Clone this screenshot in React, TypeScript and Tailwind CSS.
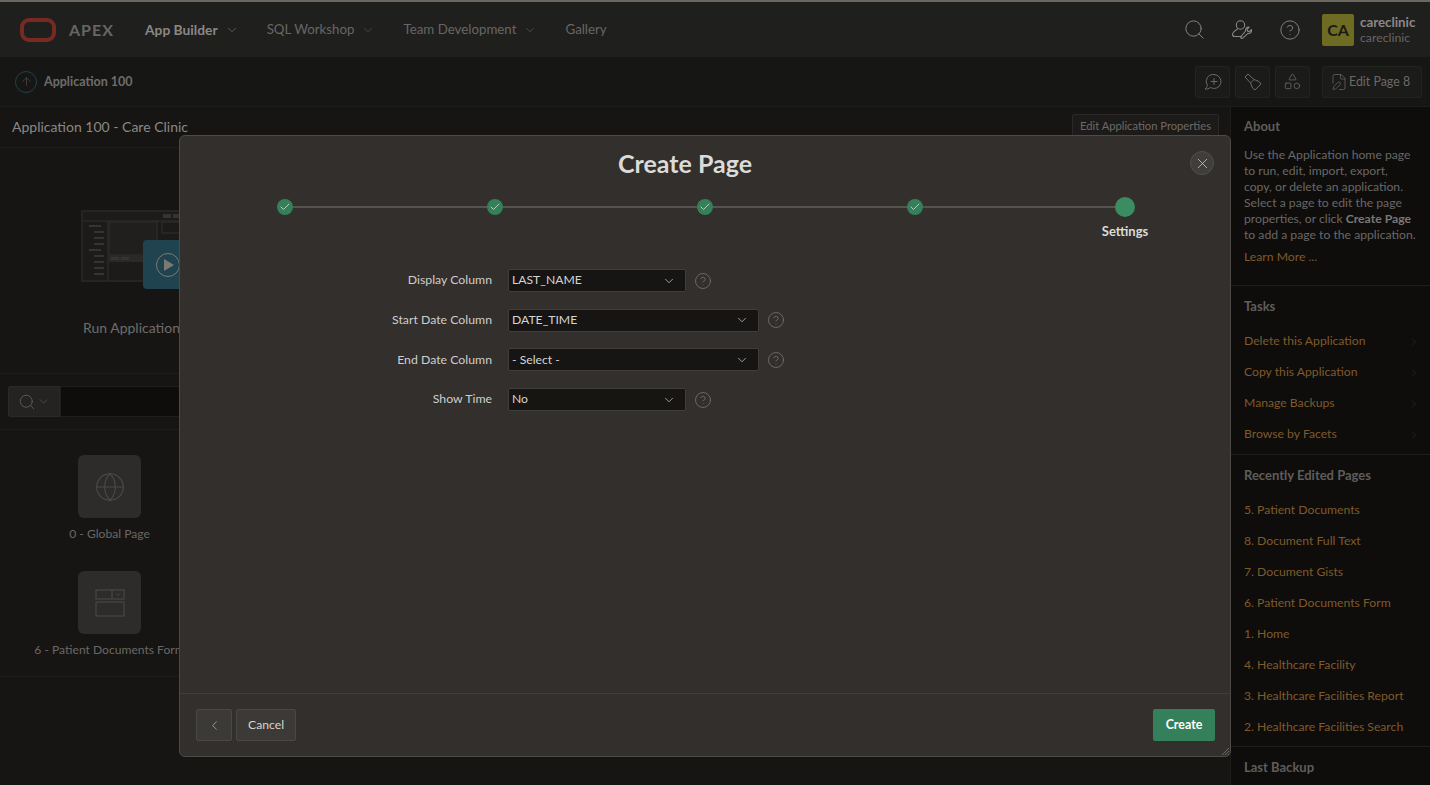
import { Check, ChevronDown, ChevronLeft, ChevronRight, CircleHelp, FilePen, Globe, Search, Shapes, X, ArrowUp } from 'lucide-react';

const tasks = ['Delete this Application', 'Copy this Application', 'Manage Backups', 'Browse by Facets'];
const recentPages = [
  '5. Patient Documents',
  '8. Document Full Text',
  '7. Document Gists',
  '6. Patient Documents Form',
  '1. Home',
  '4. Healthcare Facility',
  '3. Healthcare Facilities Report',
  '2. Healthcare Facilities Search',
];
const fields = [
  { label: 'Display Column', value: 'LAST_NAME', wide: false },
  { label: 'Start Date Column', value: 'DATE_TIME', wide: true },
  { label: 'End Date Column', value: '- Select -', wide: true },
  { label: 'Show Time', value: 'No', wide: false },
];

function NavItem({ label, active, menu }: { label: string; active?: boolean; menu?: boolean }) {
  return (
    <div className={`flex items-center gap-[7px] ${active ? 'text-[13.8px] font-bold text-[#8a8885]' : 'text-[13.3px] text-[#686663]'}`}>
      <span className="pt-px">{label}</span>
      {menu && <ChevronDown size={14} strokeWidth={1} />}
    </div>
  );
}

function ToolButton({ children }: { children: React.ReactNode }) {
  return (
    <div className="flex h-[32px] w-[35px] items-center justify-center rounded-[2px] border border-[#232322] bg-[#1b1b1a] text-[#6c6a67]">
      {children}
    </div>
  );
}

function UserWrenchIcon() {
  return (
    <svg width="22" height="22" viewBox="0 0 22 22" fill="none" stroke="currentColor" strokeWidth="1.1" strokeLinecap="round" strokeLinejoin="round">
      <circle cx="9.5" cy="6" r="4.2" />
      <path d="M6.5 10 C4.5 11.5 1.5 13 1.5 15.5 C1.5 17 2.5 17.5 4 17.5 H10.5" />
      <path d="M20.5 10.5 L18.4 12.6 L16.6 12.1 L16.1 10.3 L18.2 8.2 C15.8 7.8 14 9.6 14.6 12 L10 17.5 C9.2 18.6 10.6 20 11.7 19.1 L17 14.4 C19.2 14.9 21 13 20.5 10.5 Z" />
    </svg>
  );
}

function FlashlightIcon() {
  return (
    <svg width="20" height="20" viewBox="0 0 20 20" fill="none" stroke="currentColor" strokeWidth="1" strokeLinejoin="round">
      <path d="M2 5 L5 2 L11 7.5 L16 9.5 L18 12 L12 18 L9.5 16 L7.5 11 Z" />
      <path d="M7.5 11 L11 7.5" />
    </svg>
  );
}

function ChatPlusIcon() {
  return (
    <svg width="20" height="20" viewBox="0 0 20 20" fill="none" stroke="currentColor" strokeWidth="1" strokeLinecap="round" strokeLinejoin="round">
      <path d="M11 2.5 a7 7 0 1 1 -3.6 13 C5.8 16.8 4 17.3 2 17 C3.5 16 4.2 14.8 4.4 13.4 A7 7 0 0 1 11 2.5 Z" />
      <path d="M11 6.5 V12.5 M8 9.5 H14" />
    </svg>
  );
}

function BuilderIllustration() {
  return (
    <svg width="180" height="72" viewBox="0 0 180 72" fill="none" stroke="#2b2a28" strokeWidth="1.5">
      <rect x="1" y="1" width="178" height="70" fill="#1c1b1a" />
      <path d="M1 11 H179 M27 11 V71" />
      <rect x="28" y="12" width="48" height="33" fill="#201f1e" />
      <rect x="28" y="45" width="60" height="7" fill="#2a2927" stroke="none" />
      <rect x="81" y="12" width="50" height="11" />
      <g stroke="none" fill="#353432">
        <rect x="82" y="4" width="8" height="4" />
        <rect x="92" y="4" width="8" height="4" />
        <rect x="8" y="15" width="12" height="2" />
        <rect x="13" y="21" width="10" height="2" />
        <rect x="13" y="27" width="10" height="2" />
        <rect x="13" y="33" width="10" height="2" />
        <rect x="8" y="39" width="12" height="2" />
        <rect x="13" y="45" width="10" height="2" />
        <rect x="13" y="51" width="10" height="2" />
        <rect x="13" y="57" width="10" height="2" />
        <rect x="13" y="63" width="10" height="2" />
        <rect x="30" y="47" width="8" height="3" />
        <rect x="40" y="47" width="8" height="3" />
      </g>
    </svg>
  );
}

function SidebarHeading({ children }: { children: React.ReactNode }) {
  return <div className="text-[13px] leading-[20px] font-bold text-[#5f5d5a]">{children}</div>;
}

function SelectBox({ value, wide }: { value: string; wide: boolean }) {
  return (
    <div className={`flex h-[23px] items-center justify-between rounded-[2px] border border-[#403e3b] bg-[#161514] pr-[9px] pl-[3px] text-[12.2px] text-[#d5d4d2] ${wide ? 'w-[251px]' : 'w-[178px]'}`}>
      <span>{value}</span>
      <ChevronDown size={14} strokeWidth={1.2} />
    </div>
  );
}

function WizardStep({ label, last }: { label?: string; last?: boolean }) {
  return (
    <div className="relative flex w-[210px] flex-col items-center">
      <div className="flex h-[20px] items-center">
        {!last && <div className="absolute top-[9px] left-[105px] h-[2px] w-[210px] bg-[#575450]" />}
        {last ? (
          <div className="relative h-[20px] w-[20px] rounded-full bg-[#3b8c61]" />
        ) : (
          <div className="relative flex h-[16px] w-[16px] items-center justify-center rounded-full bg-[#33805a] text-[#dfe8e2]">
            <Check size={12} strokeWidth={1.5} />
          </div>
        )}
      </div>
      {label && <div className="mt-[4px] text-[13px] leading-[20px] font-bold text-[#dcdbd9]">{label}</div>}
    </div>
  );
}

function CreatePageDialog() {
  return (
    <div className="absolute top-[135px] left-[179px] flex h-[622px] w-[1052px] flex-col rounded-[6px] border border-[#4c4a47] bg-[#322f2c]">
      <div className="relative h-[57px] pt-[9px] pr-[40px] text-center text-[25px] leading-[36px] font-bold text-[#dcdbd9]">
        Create Page
        <div className="absolute top-[15px] right-[16px] flex h-[24px] w-[24px] items-center justify-center rounded-full border border-[#514f4c] bg-[#403e3b] text-[#dcdbd9]">
          <X size={17} strokeWidth={1} />
        </div>
      </div>
      <div className="flex h-[60px] pt-[4px]">
        <WizardStep />
        <WizardStep />
        <WizardStep />
        <WizardStep />
        <WizardStep label="Settings" last />
      </div>
      <div className="flex flex-1 flex-col gap-[16.7px] pt-[16px]">
        {fields.map((field) => (
          <div key={field.label} className="flex h-[23px] items-center">
            <div className="w-[312px] text-right text-[12.3px] text-[#cfcecc]">{field.label}</div>
            <div className="ml-[16px]">
              <SelectBox value={field.value} wide={field.wide} />
            </div>
            <CircleHelp size={18} strokeWidth={1} className="ml-[8px] text-[#7b7976]" />
          </div>
        ))}
      </div>
      <div className="relative flex h-[63px] items-center justify-between border-t border-[#403e3b] pr-[15px] pl-[16px]">
        <div className="flex gap-[4px]">
          <div className="flex h-[32px] w-[36px] items-center justify-center rounded-[2px] border border-[#4a4845] bg-[#3c3a37] text-[#cfcecc]">
            <ChevronLeft size={15} strokeWidth={1} />
          </div>
          <div className="flex h-[32px] w-[60px] items-center justify-center rounded-[2px] border border-[#4a4845] bg-[#3c3a37] text-[12.2px] text-[#d5d4d2]">Cancel</div>
        </div>
        <div className="flex h-[32px] w-[62px] items-center justify-center rounded-[2px] bg-[#33805a] text-[12.4px] font-bold text-white">Create</div>
        <svg className="absolute right-[1px] bottom-[1px]" width="8" height="8" viewBox="0 0 8 8" stroke="#6a6865" strokeWidth="1">
          <path d="M1 8 L8 1 M4 8 L8 4 M7 8 L8 7" />
        </svg>
      </div>
    </div>
  );
}

export default function App() {
  return (
    <div className="relative h-[785px] w-[1430px] overflow-hidden bg-[#161514] font-['Lato',sans-serif]">
      <div className="h-[2px] bg-[#6b675e]" />

      {/* Header */}
      <header className="flex h-[55px] items-center justify-between bg-[#1f1f1e] pr-[14px] pl-[20px]">
        <div className="flex items-center">
          <div className="h-[24px] w-[36px] rounded-[9px] border-[4px] border-[#782a22]" />
          <span className="ml-[13px] w-[76px] text-[16px] font-bold tracking-[1px] text-[#686663]">APEX</span>
          <div className="flex items-center gap-[28px]">
            <NavItem label="App Builder" active menu />
            <NavItem label="SQL Workshop" menu />
            <NavItem label="Team Development" menu />
            <NavItem label="Gallery" />
          </div>
        </div>
        <div className="flex items-center text-[#8a8885]">
          <Search size={23} strokeWidth={1} />
          <div className="ml-[25px]">
            <UserWrenchIcon />
          </div>
          <CircleHelp size={22} strokeWidth={1} className="ml-[26px]" />
          <div className="ml-[21px] flex h-[32px] w-[32px] items-center justify-center rounded-[2px] bg-[#6e6c22] text-[16px] font-bold text-[#191917]">CA</div>
          <div className="ml-[6px] flex w-[56px] flex-col leading-[16px]">
            <span className="text-[13.3px] font-bold text-[#8a8885]">careclinic</span>
            <span className="text-[12.3px] text-[#686663]">careclinic</span>
          </div>
        </div>
      </header>

      {/* Breadcrumb bar */}
      <div className="flex h-[50px] items-center justify-between border-b border-[#1d1d1c] bg-[#161615] pr-[8px] pl-[15px]">
        <div className="flex items-center gap-[7px]">
          <div className="flex h-[22px] w-[22px] items-center justify-center rounded-full border border-[#24404a] text-[#5f5d5a]">
            <ArrowUp size={13} strokeWidth={1} />
          </div>
          <span className="pt-px text-[12.5px] font-bold text-[#6f6d6a]">Application 100</span>
        </div>
        <div className="flex items-center gap-[5px]">
          <ToolButton>
            <ChatPlusIcon />
          </ToolButton>
          <ToolButton>
            <FlashlightIcon />
          </ToolButton>
          <ToolButton>
            <Shapes size={19} strokeWidth={1} />
          </ToolButton>
          <div className="ml-[7px] flex h-[32px] w-[100px] items-center gap-[1px] rounded-[2px] border border-[#232322] bg-[#1b1b1a] pl-[7px] text-[12.4px] text-[#6c6a67]">
            <FilePen size={18} strokeWidth={1} />
            <span className="pt-px">Edit Page 8</span>
          </div>
        </div>
      </div>

      <div className="flex h-[678px]">
        {/* Main column */}
        <main className="w-[1231px] border-r border-[#1d1d1c]">
          <div className="flex h-[41px] items-center justify-between border-b border-[#1d1d1c] pr-[11px] pb-[2px] pl-[12px]">
            <span className="text-[14px] text-[#8a8885]">Application 100 - Care Clinic</span>
            <div className="flex h-[24px] w-[147px] items-center justify-center rounded-[2px] border border-[#2a2928] bg-[#1c1b1a] text-[11.2px] whitespace-nowrap text-[#6c6a67]">
              Edit Application Properties
            </div>
          </div>
          <div className="relative h-[226px] border-b border-[#1d1d1c] pt-[62px] pl-[81px]">
            <BuilderIllustration />
            <div className="absolute top-[92px] left-[143px] h-[49px] w-[60px] rounded-[4px] bg-[#1f444f]" />
            <div className="absolute top-[105px] left-[156px] flex h-[24px] w-[24px] items-center justify-center rounded-full border border-[#7b7976]">
              <div className="ml-[2px] h-0 w-0 border-y-[6px] border-l-[10px] border-y-transparent border-l-[#7b7976]" />
            </div>
            <div className="mt-[35px] ml-[2px] text-[14px] text-[#6f6d6a]">Run Application</div>
          </div>
          <div className="flex h-[56px] items-center border-b border-[#1d1d1c] pr-[8px] pl-[8px]">
            <div className="flex h-[31px] w-[52px] items-center justify-center gap-[1px] rounded-l-[2px] border border-[#2a2928] bg-[#242322] text-[#6c6a67]">
              <Search size={18} strokeWidth={1} />
              <ChevronDown size={13} strokeWidth={1} />
            </div>
            <div className="h-[31px] flex-1 border border-[#1d1d1c] bg-[#0e0d0c]" />
          </div>
          <div className="h-[247px] border-b border-[#1d1d1c] pt-[25px]">
            <div className="flex w-[219px] flex-col items-center">
              <div className="flex h-[63px] w-[63px] items-center justify-center rounded-[6px] bg-[#2e2c2a] text-[#4d4b48]">
                <Globe size={32} strokeWidth={0.8} />
              </div>
              <div className="mt-[6px] text-[12.1px] leading-[20px] text-[#6a6865]">0 - Global Page</div>
            </div>
            <div className="mt-[27px] flex w-[219px] flex-col items-center">
              <div className="flex h-[63px] w-[63px] items-center justify-center rounded-[6px] bg-[#2e2c2a]">
                <svg width="30" height="28" viewBox="0 0 30 28" fill="none" stroke="#4d4b48" strokeWidth="1">
                  <rect x="1" y="1" width="28" height="9" />
                  <path d="M17 1 V10 M21 4.5 L23 6.5 L25 4.5" />
                  <rect x="1" y="13" width="28" height="14" />
                </svg>
              </div>
              <div className="mt-[6px] text-[12.1px] leading-[20px] whitespace-nowrap text-[#6a6865]">6 - Patient Documents Form</div>
            </div>
          </div>
        </main>

        {/* Right sidebar */}
        <aside className="flex-1 bg-[#0e0d0c] text-[#6a6865]">
          <div className="border-b border-[#1d1d1c] pt-[9px] pr-[14px] pb-[20px] pl-[13px]">
            <SidebarHeading>About</SidebarHeading>
            <p className="mt-[11px] text-[12.2px] leading-[16px]">
              Use the Application home page to run, edit, import, export, copy, or delete an application. Select a page to edit the page properties, or click <b className="text-[#7a7875]">Create Page</b> to add a page to the application.
            </p>
            <div className="mt-[6px] text-[12.2px] leading-[16px] text-[#7f5a2a]">Learn More ...</div>
          </div>
          <div className="border-b border-[#1d1d1c] pt-[10px] pb-[4px] pl-[13px]">
            <SidebarHeading>Tasks</SidebarHeading>
            <div className="mt-[10px]">
              {tasks.map((task) => (
                <div key={task} className="flex h-[31px] items-center justify-between pr-[10px] text-[12.2px] text-[#7f5a2a]">
                  <span>{task}</span>
                  <ChevronRight size={12} strokeWidth={1} className="text-[#3a3937]" />
                </div>
              ))}
            </div>
          </div>
          <div className="border-b border-[#1d1d1c] pt-[10px] pb-[3px] pl-[13px]">
            <SidebarHeading>Recently Edited Pages</SidebarHeading>
            <div className="mt-[10px]">
              {recentPages.map((page) => (
                <div key={page} className="flex h-[31px] items-center text-[12.2px] text-[#7f5a2a]">{page}</div>
              ))}
            </div>
          </div>
          <div className="pt-[10px] pl-[13px]">
            <SidebarHeading>Last Backup</SidebarHeading>
          </div>
        </aside>
      </div>

      <CreatePageDialog />
    </div>
  );
}
